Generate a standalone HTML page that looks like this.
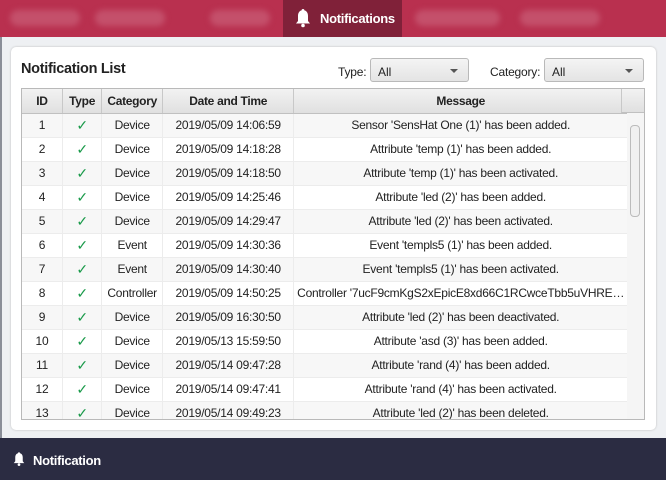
<!DOCTYPE html>
<html><head><style>
*{box-sizing:border-box;margin:0;padding:0}
body{width:666px;height:480px;overflow:hidden;background:#eef0f3;font-family:"Liberation Sans",Arial,sans-serif;position:relative;color:#222}
.top{position:absolute;left:0;top:0;width:666px;height:37px;background:#b9304f}
.blur{position:absolute;top:10px;height:16px;border-radius:8px;background:#c4506b;filter:blur(3px)}
.act{position:absolute;left:283px;top:0;width:119px;height:37px;background:#802139;color:#fff;font-weight:bold;font-size:13px;letter-spacing:-0.3px}
.act span{position:absolute;left:37px;top:11px}
.lstrip{position:absolute;left:0;top:37px;width:2px;height:401px;background:#8a8e98}
.card{position:absolute;left:11px;top:47px;width:645px;height:383px;background:#fff;border-radius:5px;box-shadow:0 0 2px #bbb}
h1{position:absolute;left:21px;top:61px;font-size:14.5px;font-weight:bold;letter-spacing:-0.3px}
.lbl{position:absolute;font-size:12px;top:65px;letter-spacing:-0.2px}
.sel{position:absolute;top:58px;height:24px;border:1px solid #b9b9b9;border-radius:3px;background:linear-gradient(#f4f4f4,#e4e4e4);font-size:12px;padding:6px 0 0 7px}
.sel:after{content:"";position:absolute;right:10px;top:10px;border:4px solid transparent;border-top:4px solid #555;border-bottom:0}
.tbl{position:absolute;left:21px;top:88px;width:624px;height:332px;border:1px solid #b9b9b9;overflow:hidden;background:#fff}
table{border-collapse:collapse;table-layout:fixed;width:606px;font-size:12px;letter-spacing:-0.25px}
th{height:24px;background:linear-gradient(#f2f2f2,#e0e0e0);border-right:1px solid #c8c8c8;border-bottom:1px solid #c0c0c0;font-weight:bold;letter-spacing:-0.3px}
td{height:24px;text-align:center;border-right:1px solid #ececec;border-bottom:1px solid #ececec;white-space:nowrap;overflow:hidden;text-overflow:ellipsis;padding:0 2px}
tr:nth-child(even) td{background:#f7f7f7}
.ck{color:#1a9a4a;font-size:14px}
.hx{position:absolute;right:0;top:0;width:23px;height:24px;background:linear-gradient(#f2f2f2,#e0e0e0);border-bottom:1px solid #c0c0c0;border-left:1px solid #c8c8c8}
.sb{position:absolute;right:0;top:24px;width:17px;height:308px;background:#f5f5f5}
.th{position:absolute;left:3px;top:12px;width:10px;height:92px;border:1px solid #bbb;border-radius:4px;background:#f0f0f0}
.bot{position:absolute;left:0;top:438px;width:666px;height:42px;background:#2b2c42;color:#fff;font-weight:bold;font-size:13px;letter-spacing:-0.3px}
.bot span{position:absolute;left:33px;top:15px}
</style></head><body>
<div class="top">
<div class="blur" style="left:10px;width:70px"></div>
<div class="blur" style="left:95px;width:70px"></div>
<div class="blur" style="left:210px;width:60px"></div>
<div class="blur" style="left:415px;width:85px"></div>
<div class="blur" style="left:520px;width:80px"></div>
<div class="act"><svg style="position:absolute;left:12px;top:8px" width="16" height="20" viewBox="0 0 16 20"><path d="M8 1c1 0 1.4.7 1.4 1.4C12 3 13 5.5 13 8v5l2 2.5H1L3 13V8c0-2.5 1-5 3.6-5.6C6.6 1.7 7 1 8 1z" fill="#fff"/><circle cx="8" cy="17.5" r="1.8" fill="#fff"/></svg><span>Notifications</span></div>
</div>
<div class="lstrip"></div>
<div class="card"></div>
<h1>Notification List</h1>
<div class="lbl" style="left:338px">Type:</div>
<div class="sel" style="left:370px;width:99px">All</div>
<div class="lbl" style="left:490px">Category:</div>
<div class="sel" style="left:544px;width:100px">All</div>
<div class="tbl">
<table>
<colgroup><col style="width:40px"><col style="width:39px"><col style="width:60px"><col style="width:130px"><col style="width:330px"></colgroup>
<tr><th>ID</th><th>Type</th><th>Category</th><th>Date and Time</th><th>Message</th></tr>
<tr><td>1</td><td class="ck">✓</td><td>Device</td><td>2019/05/09 14:06:59</td><td>Sensor 'SensHat One (1)' has been added.</td></tr>
<tr><td>2</td><td class="ck">✓</td><td>Device</td><td>2019/05/09 14:18:28</td><td>Attribute 'temp (1)' has been added.</td></tr>
<tr><td>3</td><td class="ck">✓</td><td>Device</td><td>2019/05/09 14:18:50</td><td>Attribute 'temp (1)' has been activated.</td></tr>
<tr><td>4</td><td class="ck">✓</td><td>Device</td><td>2019/05/09 14:25:46</td><td>Attribute 'led (2)' has been added.</td></tr>
<tr><td>5</td><td class="ck">✓</td><td>Device</td><td>2019/05/09 14:29:47</td><td>Attribute 'led (2)' has been activated.</td></tr>
<tr><td>6</td><td class="ck">✓</td><td>Event</td><td>2019/05/09 14:30:36</td><td>Event 'templs5 (1)' has been added.</td></tr>
<tr><td>7</td><td class="ck">✓</td><td>Event</td><td>2019/05/09 14:30:40</td><td>Event 'templs5 (1)' has been activated.</td></tr>
<tr><td>8</td><td class="ck">✓</td><td>Controller</td><td>2019/05/09 14:50:25</td><td>Controller '7ucF9cmKgS2xEpicE8xd66C1RCwceTbb5uVHRE…</td></tr>
<tr><td>9</td><td class="ck">✓</td><td>Device</td><td>2019/05/09 16:30:50</td><td>Attribute 'led (2)' has been deactivated.</td></tr>
<tr><td>10</td><td class="ck">✓</td><td>Device</td><td>2019/05/13 15:59:50</td><td>Attribute 'asd (3)' has been added.</td></tr>
<tr><td>11</td><td class="ck">✓</td><td>Device</td><td>2019/05/14 09:47:28</td><td>Attribute 'rand (4)' has been added.</td></tr>
<tr><td>12</td><td class="ck">✓</td><td>Device</td><td>2019/05/14 09:47:41</td><td>Attribute 'rand (4)' has been activated.</td></tr>
<tr><td>13</td><td class="ck">✓</td><td>Device</td><td>2019/05/14 09:49:23</td><td>Attribute 'led (2)' has been deleted.</td></tr>
</table>
<div class="hx"></div>
<div class="sb"><div class="th"></div></div>
</div>
<div class="bot"><svg style="position:absolute;left:13px;top:13px" width="12" height="16" viewBox="0 0 16 20"><path d="M8 1c1 0 1.4.7 1.4 1.4C12 3 13 5.5 13 8v5l2 2.5H1L3 13V8c0-2.5 1-5 3.6-5.6C6.6 1.7 7 1 8 1z" fill="#fff"/><circle cx="8" cy="17.5" r="1.8" fill="#fff"/></svg><span>Notification</span></div>
</body></html>
